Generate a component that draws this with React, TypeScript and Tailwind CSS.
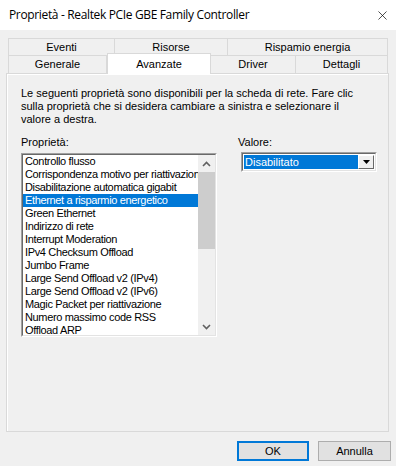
import { X } from "lucide-react";

const items = [
  "Controllo flusso",
  "Corrispondenza motivo per riattivazione",
  "Disabilitazione automatica gigabit",
  "Ethernet a risparmio energetico",
  "Green Ethernet",
  "Indirizzo di rete",
  "Interrupt Moderation",
  "IPv4 Checksum Offload",
  "Jumbo Frame",
  "Large Send Offload v2 (IPv4)",
  "Large Send Offload v2 (IPv6)",
  "Magic Packet per riattivazione",
  "Numero massimo code RSS",
  "Offload ARP",
];

const dlg = "font-['Liberation_Sans',Arial,sans-serif] text-[11px] text-black";

const Chevron = ({ up }: { up?: boolean }) => (
  <svg width="9" height="6" viewBox="0 0 9 6" className={up ? "" : "rotate-180"}>
    <path d="M1 5 L4.5 1.5 L8 5" fill="none" stroke="#606060" strokeWidth="1.6" />
  </svg>
);

const App = () => {
  return (
    <div className={`w-[396px] h-[466px] flex flex-col bg-[#f0f0f0] overflow-hidden ${dlg}`}>
      {/* barra del titolo */}
      <div className="h-[30px] bg-white flex items-center justify-between pl-[9px] pr-[6px]">
        <span className="font-['Open_Sans',sans-serif] text-[12px] text-black tracking-[-0.35px]">
          Proprietà - Realtek PCIe GBE Family Controller
        </span>
        <X size={15} strokeWidth={1.1} className="text-black" />
      </div>

      {/* schede */}
      <div className="mt-[8px] ml-[8px] w-[380px]">
        <div className="flex h-[18px]">
          <div className="w-[107px] border border-[#d9d9d9] flex items-center justify-center">Eventi</div>
          <div className="w-[113px] border-y border-r border-[#d9d9d9] flex items-center justify-center">Risorse</div>
          <div className="w-[160px] border-y border-r border-[#d9d9d9] flex items-center justify-center">Rispamio energia</div>
        </div>
        <div className="flex h-[17px]">
          <div className="w-[99px] border-x border-[#d9d9d9] flex items-center justify-center">Generale</div>
          <div className="relative z-10 w-[104px] h-[21px] -mt-[3px] -mb-[1px] bg-white border-x border-t border-[#d9d9d9] flex items-start justify-center pt-[2px]">
            Avanzate
          </div>
          <div className="w-[85px] border-r border-[#d9d9d9] flex items-center justify-center">Driver</div>
          <div className="w-[92px] border-r border-[#d9d9d9] flex items-center justify-center">Dettagli</div>
        </div>
      </div>

      {/* pannello */}
      <div className="ml-[6px] w-[383px] h-[359px] border border-[#d9d9d9] shadow-[inset_1px_1px_0_#ffffff] pt-[13px] pl-[14px] leading-[13px]">
        <p>
          Le seguenti proprietà sono disponibili per la scheda di rete. Fare clic
          <br />
          sulla proprietà che si desidera cambiare a sinistra e selezionare il
          <br />
          valore a destra.
        </p>

        <div className="flex mt-[10px]">
          <div className="flex flex-col">
            <span>Proprietà:</span>
            <div className="mt-[4px] w-[196px] h-[184px] border border-t-[#a0a0a0] border-l-[#a0a0a0] border-b-white border-r-white">
              <div className="h-full border border-t-[#696969] border-l-[#696969] border-b-[#e3e3e3] border-r-[#e3e3e3] bg-white flex">
                <ul className="flex-1 overflow-hidden whitespace-nowrap tracking-[-0.35px]">
                  {items.map((item, i) => (
                    <li
                      key={item}
                      className={
                        i === 3
                          ? "h-[13px] pl-[2px] bg-[#0078d7] text-white"
                          : "h-[13px] pl-[2px]"
                      }
                    >
                      {item}
                    </li>
                  ))}
                </ul>
                <div className="w-[17px] bg-[#f0f0f0] flex flex-col">
                  <div className="h-[17px] flex items-center justify-center">
                    <Chevron up />
                  </div>
                  <div className="h-[77px] bg-[#cdcdcd]"></div>
                  <div className="flex-1"></div>
                  <div className="h-[17px] flex items-center justify-center">
                    <Chevron />
                  </div>
                </div>
              </div>
            </div>
          </div>

          <div className="flex flex-col ml-[21px]">
            <span>Valore:</span>
            <div className="mt-[3px] ml-[3px] w-[136px] h-[20px] border border-t-[#a0a0a0] border-l-[#a0a0a0] border-b-white border-r-white">
              <div className="h-full border border-t-[#696969] border-l-[#696969] border-b-[#e3e3e3] border-r-[#e3e3e3] bg-white flex p-[1px]">
                <div className="flex-1 bg-[#0078d7] text-white pl-[1px] flex items-center">Disabilitato</div>
                <div className="w-[16px] bg-[#f0f0f0] border border-t-white border-l-white border-b-[#696969] border-r-[#696969] flex items-center justify-center">
                  <svg width="7" height="4" viewBox="0 0 7 4">
                    <path d="M0 0 H7 L3.5 4 Z" fill="#000" />
                  </svg>
                </div>
              </div>
            </div>
          </div>
        </div>
      </div>

      {/* pulsanti */}
      <div className="flex justify-end gap-[9px] mt-[9px] pr-[5px]">
        <button className="w-[72px] h-[20px] bg-[#e1e1e1] border-2 border-[#0078d7] flex items-center justify-center">
          OK
        </button>
        <button className="w-[73px] h-[20px] bg-[#e1e1e1] border border-[#adadad] flex items-center justify-center">
          Annulla
        </button>
      </div>
    </div>
  );
};

export default App;
